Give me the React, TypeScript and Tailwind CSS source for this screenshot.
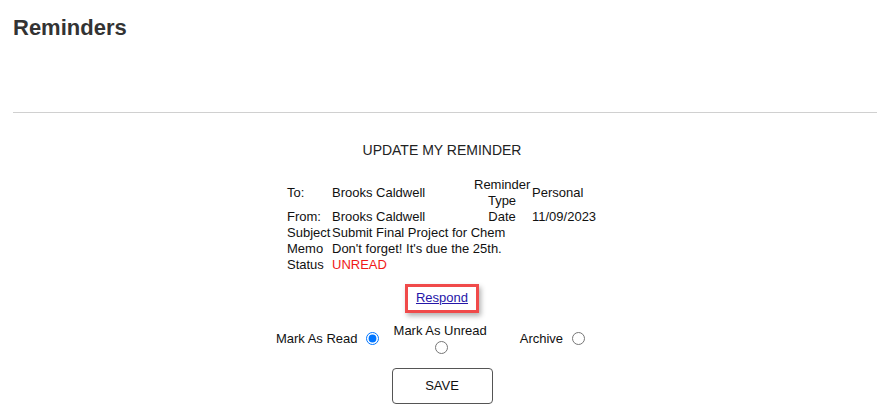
import React from 'react';

const cell = 'px-px leading-4 flex items-center';

function Radio({ checked }: { checked?: boolean }) {
  return <input type="radio" name="reminder-state" defaultChecked={checked} className="w-[13px] h-[13px] m-0" />;
}

export default function App() {
  return (
    <div className="w-[890px] h-[410px] overflow-hidden bg-white text-[#111] font-['Liberation_Sans',Arial,sans-serif]">
      <div className="px-[13px]">
        <h1 className="pt-[15px] text-[22px] leading-[26px] font-bold text-[#333]">Reminders</h1>
        <div className="mt-[71px] h-px bg-[#d0d0d0]" />
      </div>

      <div className="w-[884px] flex flex-col items-center">
        <div className="mt-[29px] text-[14px] leading-4 text-[#222]">UPDATE MY REMINDER</div>

        {/* reminder details */}
        <div className="mt-[19px] w-[312px] grid grid-cols-[45px_142px_58px_67px] text-[13px]">
          <div className={cell}>To:</div>
          <div className={cell}>Brooks Caldwell</div>
          <div className="px-px leading-4 text-center">Reminder<br />Type</div>
          <div className={cell}>Personal</div>

          <div className={cell}>From:</div>
          <div className={cell}>Brooks Caldwell</div>
          <div className="px-px leading-4 text-center">Date</div>
          <div className={cell}>11/09/2023</div>

          <div className={cell}>Subject</div>
          <div className={cell + ' col-span-3 whitespace-nowrap'}>Submit Final Project for Chem</div>

          <div className={cell}>Memo</div>
          <div className={cell + ' col-span-3 whitespace-nowrap'}>Don't forget! It's due the 25th.</div>

          <div className={cell}>Status</div>
          <div className={cell + ' col-span-3 text-[#f01818]'}>UNREAD</div>
        </div>

        <div className="mt-[11px] border-[3px] border-[#f04a4a] px-[8px] pt-[3px] pb-[4px] shadow-[2px_3px_5px_rgba(0,0,0,0.3)]">
          <a href="#" className="block text-[13px] leading-4 text-[#2516a8] underline">Respond</a>
        </div>

        {/* state options */}
        <div className="mt-[10px] pr-[23px] flex items-center text-[13px] leading-4">
          <label className="flex items-center">
            <span>Mark As Read</span>
            <span className="ml-[8px] flex"><Radio checked /></span>
          </label>
          <label className="ml-[15px] flex flex-col items-center">
            <span>Mark As Unread</span>
            <span className="mt-[2px] pl-[3px] flex"><Radio /></span>
          </label>
          <label className="ml-[33px] flex items-center">
            <span>Archive</span>
            <span className="ml-[9px] flex"><Radio /></span>
          </label>
        </div>

        <button className="mt-[14px] w-[101px] h-[36px] border border-[#555] rounded-[4px] bg-white text-[13px] text-[#111]">
          SAVE
        </button>
      </div>
    </div>
  );
}
